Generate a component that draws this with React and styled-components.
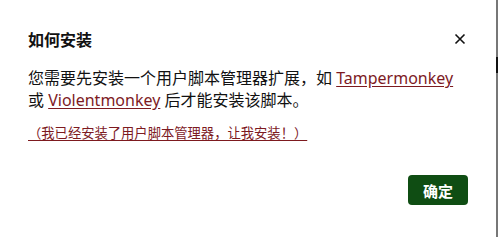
import styled, { createGlobalStyle } from "styled-components";

const Global = createGlobalStyle`
  html, body { margin: 0; padding: 0; background: #fff; }
  body { font-family: "Noto Sans", "Noto Sans CJK SC", sans-serif; color: #111; }
`;

export default function App() {
  return (
    <Page>
      <Global />
      <Dialog>
        <Header>
          <Title>如何安装</Title>
          <Close aria-label="close">
            <svg width="12" height="12" viewBox="0 0 12 12">
              <path d="M1.5 1.5L10.5 10.5M10.5 1.5L1.5 10.5" stroke="#111" strokeWidth="1.6" />
            </svg>
          </Close>
        </Header>
        <Body>
          您需要先安装一个用户脚本管理器扩展，如 <Link href="#">Tampermonkey</Link>
          <br />
          或 <Link href="#">Violentmonkey</Link> 后才能安装该脚本。
        </Body>
        <Small href="#">（我已经安装了用户脚本管理器，让我安装！）</Small>
        <Footer>
          <Button>确定</Button>
        </Footer>
      </Dialog>
      <ScrollEdge>
        <Thumb />
      </ScrollEdge>
    </Page>
  );
}

const Page = styled.div`
  display: flex;
  width: 499px;
  height: 237px;
  overflow: hidden;
`;

const Dialog = styled.div`
  flex: 1;
  padding: 26px 31px 0 28px;
  display: flex;
  flex-direction: column;
`;

const Header = styled.div`
  display: flex;
  justify-content: space-between;
  align-items: center;
  height: 26px;
`;

const Title = styled.h2`
  margin: 0;
  font-size: 16px;
  font-weight: 700;
  color: #111;
`;

const Close = styled.button`
  border: none;
  background: none;
  padding: 0;
  display: flex;
  margin-right: -1px;
`;

const Body = styled.p`
  margin: 15px 0 0;
  font-size: 16px;
  line-height: 22px;
  color: #111;
`;

const Link = styled.a`
  color: #7d1a1f;
  text-decoration: underline;
  text-underline-offset: 2px;
`;

const Small = styled.a`
  margin-top: 13px;
  align-self: flex-start;
  font-size: 13.3px;
  line-height: 18px;
  color: #7d1a1f;
  text-decoration: underline;
  text-underline-offset: 2px;
`;

const Footer = styled.div`
  display: flex;
  justify-content: flex-end;
  margin-top: 33px;
  margin-right: -3px;
`;

const Button = styled.button`
  width: 60px;
  height: 30px;
  border: none;
  border-radius: 4px;
  background: #0f4d13;
  color: #fff;
  font-family: "Noto Sans", "Noto Sans CJK SC", sans-serif;
  font-size: 15px;
  font-weight: 700;
`;

const ScrollEdge = styled.div`
  width: 2px;
  margin-right: 1px;
  background: #777;
  display: flex;
  flex-direction: column;
  padding-top: 57px;
`;

const Thumb = styled.div`
  height: 16px;
  background: #111;
`;
